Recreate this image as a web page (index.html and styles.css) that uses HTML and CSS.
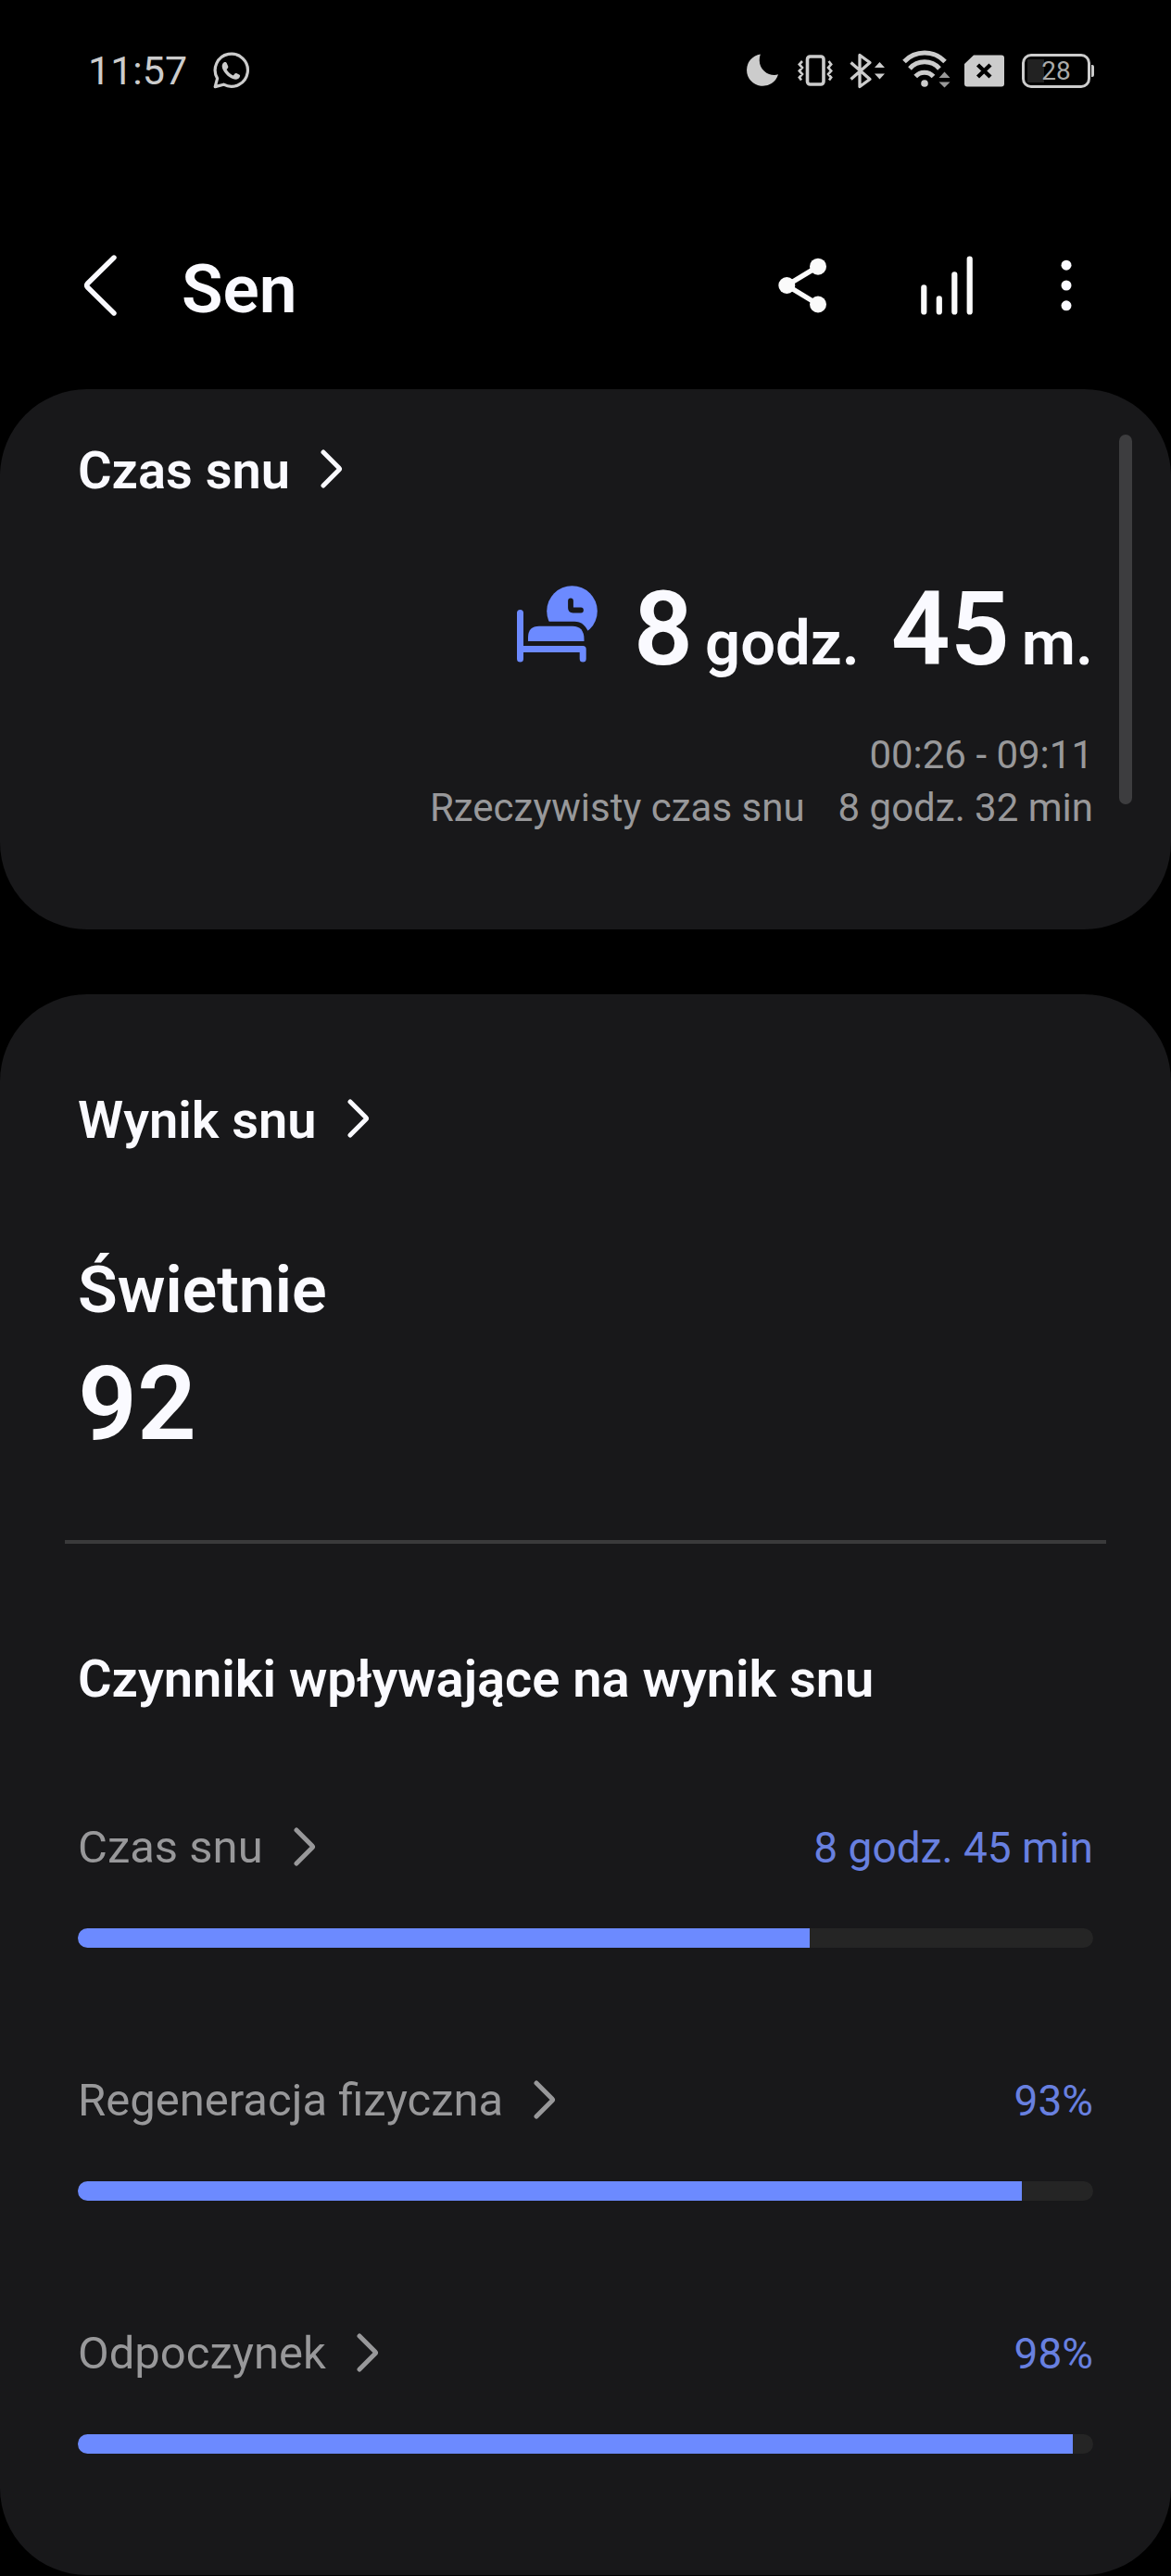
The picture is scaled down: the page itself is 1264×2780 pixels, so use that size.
FILE: index.html
```
<!DOCTYPE html>
<html lang="pl">

<head>
    <meta charset="UTF-8">
    <meta name="viewport" content="width=device-width, initial-scale=1.0">
    <title>Sen</title>
    <link rel="stylesheet" href="styles.css">
</head>

<body>
    <div class="status-bar">
        <span class="clock">11:57</span>
        <svg class="whatsapp" width="40" height="40" viewBox="0 0 40 40">
            <path d="M2.2 37.6 L4.6 28.6 A17.6 17.6 0 1 1 11.4 35.2 Z" fill="none" stroke="#ccc" stroke-width="3.2" stroke-linejoin="round" />
            <path d="M10.4 12.8 c1-2 3.6-2.4 4.4-.6 l1.4 3.4 c.4 1-.2 1.8-1.6 3.4 c1.6 3 4 5.2 7.2 6.4 c1.6-2 2.2-2.8 3.4-2.4 l3.4 1.8 c1.2.8 0 3.2-1.2 4 c-2.6 1.8-6.2.6-9.6-1.6 c-3-2-5.4-4.6-7-7.8 c-1.2-2.4-1.6-4.6-.4-6.6z" fill="#ccc" />
        </svg>
        <div class="status-icons">
            <svg class="moon" width="36" height="36" viewBox="0 0 36 36">
                <path d="M15.8 .4 A17.3 17.3 0 1 0 35 22.2 C26 25.500 10.500 17 15.800 .4 Z" fill="#ccc" />
            </svg>
            <svg class="vibrate" width="38" height="34" viewBox="0 0 38 34" fill="none" stroke="#ccc">
                <rect x="10.500" y="2" width="17.500" height="30" rx="3" stroke-width="3.600" />
                <path d="M5 7 L1.800 10.500 L5 14 L1.800 17.500 L5 21 L1.800 24.500 L4 27.500 M33.500 7 L36.200 10.500 L33 14 L36.200 17.500 L33 21 L36.200 24.500 L34 27.500" stroke-width="2.600" />
            </svg>
            <svg class="bluetooth" width="39" height="39" viewBox="0 0 39 39">
                <path d="M1.500 10.500 L22 28.500 L11 36.500 V2.500 L22 10.500 L1.500 28.500" fill="none" stroke="#ccc" stroke-width="3.300" stroke-linejoin="round" />
                <path d="M27 16 L32.500 10 L38 16 Z M27 22.500 H38 L32.500 28.500 Z" fill="#ccc" />
            </svg>
            <svg class="wifi" width="52" height="42" viewBox="0 0 52 42">
                <g fill="none" stroke="#ccc" stroke-width="5">
                    <path d="M2 12.500 A30.500 30.500 0 0 1 46 12.500" />
                    <path d="M8 20 A21.500 21.500 0 0 1 40 20" />
                    <path d="M14.200 28.500 A13 13 0 0 1 33.500 28.500" />
                </g>
                <circle cx="24" cy="36" r="3.800" fill="#ccc" />
                <path d="M39.500 30 L45.500 23.500 L51.500 30 Z M39.500 34.500 H51.500 L45.500 40.500 Z" fill="#999" />
            </svg>
            <svg class="sim" width="43" height="35" viewBox="0 0 43 35">
                <path d="M10 .500 H40 A3 3 0 0 1 43 3.500 V31.500 A3 3 0 0 1 40 34.500 H3 A3 3 0 0 1 0 31.500 V10 Z" fill="#ccc" />
                <path d="M14.500 11 L28 24 M28 11 L14.500 24" stroke="#000" stroke-width="4.400" />
            </svg>
            <div class="battery">
                <div class="battery-body"><span class="battery-text">28</span></div>
                <div class="battery-tip"></div>
            </div>
        </div>
    </div>

    <header class="app-bar">
        <svg class="back" width="36" height="68" viewBox="0 0 36 68">
            <path d="M33 4 L4.500 32 Q2.500 34 4.500 36 L33 64" fill="none" stroke="#fafaff" stroke-width="5.400" stroke-linecap="round" />
        </svg>
        <h1>Sen</h1>
        <div class="actions">
            <svg class="share" width="52" height="60" viewBox="0 0 52 60" fill="#fafafa">
                <path d="M43 9.700 L9.300 30 L43 50.500" fill="none" stroke="#fafafa" stroke-width="5.500" />
                <circle cx="9.300" cy="30" r="9" />
                <circle cx="43" cy="9.700" r="9" />
                <circle cx="43" cy="50.500" r="9" />
            </svg>
            <svg class="chart" width="56" height="64" viewBox="0 0 56 64">
                <path d="M3.300 34.300 V60.500 M19.800 46.300 V60.500 M36.300 20.300 V60.500 M52.700 3.700 V60.500" stroke="#fafafa" stroke-width="6.200" stroke-linecap="round" />
            </svg>
            <svg class="more" width="12" height="56" viewBox="0 0 12 56" fill="#fafaff">
                <circle cx="6" cy="6.200" r="5.500" />
                <circle cx="6" cy="28" r="5.500" />
                <circle cx="6" cy="49.800" r="5.500" />
            </svg>
        </div>
    </header>

    <section class="card time-card">
        <div class="scrollbar"></div>
        <div class="card-title">
            <h2>Czas snu</h2>
            <svg class="chevron" width="24" height="42" viewBox="0 0 24 42">
                <path d="M3 3 L20 20 Q21 21 20 22 L3 39" />
            </svg>
        </div>
        <div class="duration">
            <svg class="bed" width="88" height="84" viewBox="0 0 88 84">
                <circle cx="59.500" cy="27.500" r="27.300" fill="#6c8aff" />
                <path d="M58 16.500 V24 Q58 26.500 60.500 26.500 H69" fill="none" stroke="#18181a" stroke-width="5.800" stroke-linecap="round" />
                <path d="M8 66 V52 Q8 38.700 24 38.700 H62 Q73 38.700 78 52 V66 Z" fill="#18181a" />
                <path d="M12 60 V56 Q12 43.700 24 43.700 H60 Q72.500 43.700 72.500 58 V60 Z" fill="#6c8aff" />
                <path d="M3.500 29.500 V79 M3.500 68.500 H71.200 V79" fill="none" stroke="#6c8aff" stroke-width="7" stroke-linecap="round" stroke-linejoin="round" />
            </svg>
            <span class="big">8</span>
            <span class="unit hours">godz.</span>
            <span class="big">45</span>
            <span class="unit">m.</span>
        </div>
        <div class="details">
            <div>00:26 - 09:11</div>
            <div><span class="actual">Rzeczywisty czas snu</span><span>8 godz. 32 min</span></div>
        </div>
    </section>

    <section class="card score-card">
        <div class="card-title">
            <h2>Wynik snu</h2>
            <svg class="chevron" width="24" height="42" viewBox="0 0 24 42">
                <path d="M3 3 L20 20 Q21 21 20 22 L3 39" />
            </svg>
        </div>
        <div class="rating">Świetnie</div>
        <div class="score">92</div>
        <div class="divider"></div>
        <h2 class="factors-title">Czynniki wpływające na wynik snu</h2>

        <div class="factor">
            <div class="factor-row">
                <span class="factor-name">Czas snu</span>
                <svg class="chevron gray" width="24" height="42" viewBox="0 0 24 42">
                    <path d="M3 3 L20 20 Q21 21 20 22 L3 39" />
                </svg>
                <span class="factor-value">8 godz. 45 min</span>
            </div>
            <div class="bar">
                <div class="bar-fill" style="width: 72.1%"></div>
            </div>
        </div>

        <div class="factor">
            <div class="factor-row">
                <span class="factor-name">Regeneracja fizyczna</span>
                <svg class="chevron gray" width="24" height="42" viewBox="0 0 24 42">
                    <path d="M3 3 L20 20 Q21 21 20 22 L3 39" />
                </svg>
                <span class="factor-value">93%</span>
            </div>
            <div class="bar">
                <div class="bar-fill" style="width: 93%"></div>
            </div>
        </div>

        <div class="factor">
            <div class="factor-row">
                <span class="factor-name">Odpoczynek</span>
                <svg class="chevron gray" width="24" height="42" viewBox="0 0 24 42">
                    <path d="M3 3 L20 20 Q21 21 20 22 L3 39" />
                </svg>
                <span class="factor-value">98%</span>
            </div>
            <div class="bar">
                <div class="bar-fill" style="width: 98%"></div>
            </div>
        </div>
    </section>
</body>

</html>
```

FILE: styles.css
```
* {
    box-sizing: border-box;
}

body {
    margin: 0;
    background: #000;
    color: #fafaff;
    font-family: Roboto, sans-serif;
}

h1,
h2 {
    margin: 0;
    font-weight: 600;
}

svg {
    display: block;
    flex: none;
}

/* status bar */
.status-bar {
    display: flex;
    align-items: center;
    height: 152px;
    padding: 0 83px 0 95px;
    color: #ccc;
}

.clock {
    font-size: 43px;
    line-height: 50px;
}

.whatsapp {
    margin-left: 28px;
}

.status-icons {
    display: flex;
    align-items: center;
    margin-left: auto;
}

.vibrate {
    margin-left: 20px;
}

.bluetooth {
    margin-left: 18px;
}

.wifi {
    margin-left: 18px;
    margin-bottom: 3px;
}

.sim {
    margin-left: 15px;
}

.battery {
    display: flex;
    align-items: center;
    margin-left: 19px;
}

.battery-body {
    width: 74px;
    height: 37px;
    border: 3px solid #ccc;
    border-radius: 10px;
    padding: 3px;
    text-align: center;
    background: linear-gradient(#222, #222) 3px 3px / 18px 25px no-repeat;
}

.battery-text {
    display: block;
    font-size: 28px;
    line-height: 25px;
    color: #aaa;
}

.battery-tip {
    width: 3px;
    height: 13px;
    margin-left: 1px;
    border-radius: 0 2px 2px 0;
    background: #ccc;
}

/* app bar */
.app-bar {
    display: flex;
    align-items: center;
    height: 176px;
    margin: 68px 0 24px;
    padding: 0 107px 0 90px;
}

.app-bar h1 {
    margin-left: 70px;
    padding-top: 8px;
    font-size: 73px;
    line-height: 84px;
}

.actions {
    display: flex;
    align-items: center;
    margin-left: auto;
}

.chart {
    margin-left: 102px;
}

.more {
    margin-left: 95px;
}

/* cards */
.card {
    position: relative;
    border-radius: 94px;
    background: #18181a;
    padding-left: 84px;
    padding-right: 84px;
}

.time-card {
    height: 583px;
    padding-top: 55px;
}

.score-card {
    height: 1706px;
    margin-top: 70px;
    padding-top: 103px;
}

.scrollbar {
    position: absolute;
    top: 49px;
    right: 42px;
    width: 14px;
    height: 399px;
    border-radius: 7px;
    background: #3d3d3f;
}

.card-title {
    display: flex;
    align-items: center;
}

h2 {
    font-size: 56px;
    line-height: 66px;
}

.chevron {
    margin-left: 33px;
    margin-bottom: 4px;
    fill: none;
    stroke: #fafaff;
    stroke-width: 5;
    stroke-linecap: round;
}

.chevron.gray {
    margin-bottom: 2px;
    stroke: #98989a;
}

.duration {
    display: flex;
    align-items: baseline;
    justify-content: flex-end;
    height: 132px;
    margin-top: 72px;
    line-height: 132px;
    font-weight: 600;
}

.bed {
    align-self: center;
    margin-right: 38px;
    margin-bottom: 11px;
}

.big {
    font-size: 112px;
}

.unit {
    margin-left: 13px;
    font-size: 67px;
}

.hours {
    margin-right: 34px;
}

.details {
    margin-top: 41px;
    font-size: 42px;
    line-height: 57px;
    text-align: right;
    color: #98989a;
}

.actual {
    margin-right: 36px;
}

.rating {
    margin-top: 109px;
    font-size: 70px;
    line-height: 82px;
    font-weight: 600;
}

.score {
    margin-top: 16px;
    font-size: 112px;
    line-height: 132px;
    font-weight: 600;
}

.divider {
    height: 4px;
    margin: 81px -14px 0;
    background: #3a3a3b;
}

.factors-title {
    margin-top: 113px;
}

/* factors */
.factor {
    margin-top: 137px;
}

.factors-title + .factor {
    margin-top: 121px;
}

.factor-row {
    display: flex;
    align-items: center;
    height: 56px;
    font-size: 49px;
    line-height: 56px;
    color: #98989a;
}

.factor-value {
    margin-left: auto;
    font-size: 46px;
    color: #6880e0;
}

.bar {
    height: 21px;
    margin-top: 59px;
    border-radius: 11px;
    background: #252525;
    overflow: hidden;
}

.bar-fill {
    height: 100%;
    background: #6c8aff;
}
```
